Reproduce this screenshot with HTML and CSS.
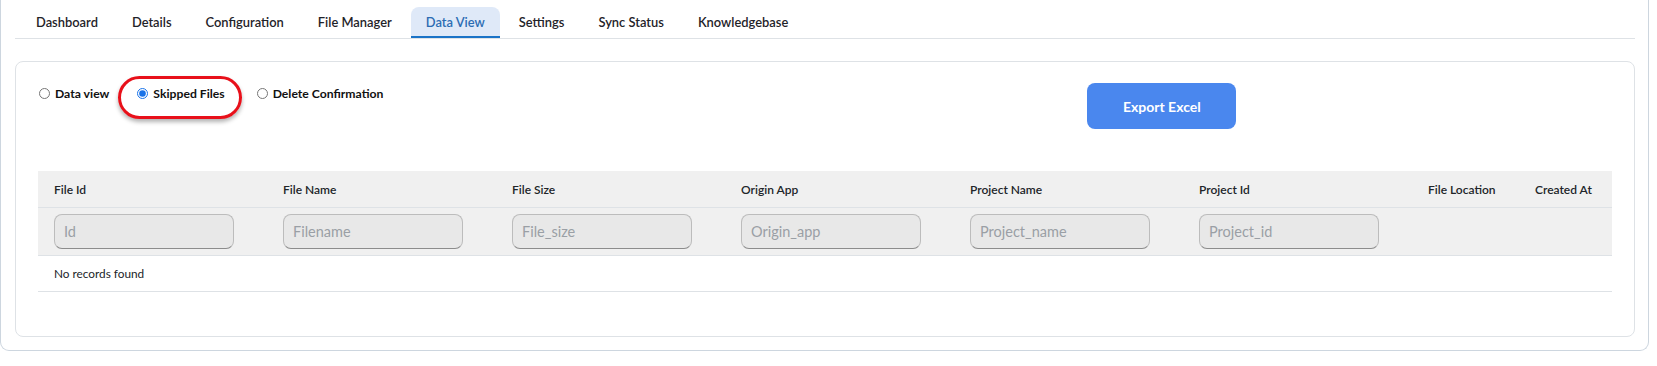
FILE: index.html
```html
<!DOCTYPE html>
<html lang="en">
<head>
    <meta charset="UTF-8">
    <title>Data View</title>
    <link rel="stylesheet" href="styles.css">
</head>
<body>
    <div class="shell">
        <nav class="tabs">
            <a class="tab">Dashboard</a>
            <a class="tab">Details</a>
            <a class="tab">Configuration</a>
            <a class="tab">File Manager</a>
            <a class="tab active">Data View</a>
            <a class="tab">Settings</a>
            <a class="tab">Sync Status</a>
            <a class="tab">Knowledgebase</a>
        </nav>

        <div class="card">
            <div class="toolbar">
                <div class="views">
                    <label class="view"><input type="radio" name="view"> Data view</label>
                    <label class="view marked"><input type="radio" name="view" checked> Skipped Files</label>
                    <label class="view"><input type="radio" name="view"> Delete Confirmation</label>
                </div>
                <div>
                    <button class="export">Export Excel</button>
                </div>
            </div>

            <table class="grid">
                <colgroup>
                    <col class="c-wide"><col class="c-wide"><col class="c-wide">
                    <col class="c-wide"><col class="c-wide"><col class="c-wide">
                    <col class="c-loc"><col>
                </colgroup>
                <thead>
                    <tr class="head">
                        <th>File Id</th>
                        <th>File Name</th>
                        <th>File Size</th>
                        <th>Origin App</th>
                        <th>Project Name</th>
                        <th>Project Id</th>
                        <th>File Location</th>
                        <th>Created At</th>
                    </tr>
                    <tr class="filters">
                        <th><input class="filter" placeholder="Id"></th>
                        <th><input class="filter" placeholder="Filename"></th>
                        <th><input class="filter" placeholder="File_size"></th>
                        <th><input class="filter" placeholder="Origin_app"></th>
                        <th><input class="filter" placeholder="Project_name"></th>
                        <th><input class="filter" placeholder="Project_id"></th>
                        <th></th>
                        <th></th>
                    </tr>
                </thead>
                <tbody>
                    <tr class="empty">
                        <td colspan="8">No records found</td>
                    </tr>
                </tbody>
            </table>
        </div>
    </div>
</body>
</html>
```

FILE: styles.css
```css
body {
    margin: 0;
    font-family: "Lato", "Liberation Sans", sans-serif;
    color: #212529;
    background: #fff;
}
.shell {
    box-sizing: border-box;
    width: 1649px;
    height: 351px;
    padding: 0 13px 0 14px;
    border: 1px solid #cdd6df;
    border-top: none;
    border-radius: 0 0 9px 9px;
}
.tabs {
    display: flex;
    gap: 4px;
    padding: 7px 0 0 6px;
    border-bottom: 1px solid #dee2e6;
}
.tab {
    height: 31px;
    line-height: 31px;
    padding: 0 15px;
    font-size: 12.9px;
    font-weight: 600;
    color: #1f2329;
    border-radius: 8px 8px 0 0;
    box-sizing: border-box;
}
.tab.active {
    background: #dfe9f8;
    color: #2b6cb3;
    border-bottom: 2px solid #1a73c7;
}
.card {
    box-sizing: border-box;
    height: 276px;
    margin-top: 22px;
    padding: 21px 22px 0;
    border: 1px solid #dee2e6;
    border-radius: 8px;
}
.toolbar {
    display: grid;
    grid-template-columns: 2fr 1fr;
    height: 46px;
}
.views {
    display: flex;
    gap: 27px;
    height: 20px;
    align-items: center;
}
.view {
    position: relative;
    display: inline-flex;
    align-items: center;
    gap: 5px;
    font-size: 12.2px;
    font-weight: 700;
    color: #111;
}
.view:last-child {
    margin-left: 4px;
}
.view input {
    width: 11px;
    height: 11px;
    margin: 0 0 0 1px;
    accent-color: #1a73e8;
}
.marked::after {
    content: "";
    position: absolute;
    top: -10px;
    bottom: -18px;
    left: -18px;
    right: -17px;
    border: 3px solid #e8101a;
    border-radius: 22px;
    box-shadow: 0 3px 4px rgba(0, 0, 0, 0.3);
}
.export {
    width: 149px;
    height: 46px;
    border: none;
    border-radius: 8px;
    background: #4a87ee;
    color: #fff;
    font-family: inherit;
    font-size: 14px;
    font-weight: 700;
}
.grid {
    width: 100%;
    margin-top: 42px;
    border-collapse: collapse;
    table-layout: fixed;
}
.c-wide {
    width: 229px;
}
.c-loc {
    width: 107px;
}
.grid th,
.grid td {
    padding: 0 16px;
    text-align: left;
    font-size: 12px;
    white-space: nowrap;
}
.head th {
    height: 36px;
    background: #f0f0f0;
    font-weight: 600;
    border-bottom: 1px solid #dee2e6;
}
.filters th {
    height: 47px;
    background: #f0f0f0;
    border-bottom: 1px solid #dee2e6;
}
.filter {
    box-sizing: border-box;
    display: block;
    width: 180px;
    height: 35px;
    padding: 0 9px;
    border: 1px solid #bcbcbc;
    border-bottom-color: #8c8c8c;
    border-radius: 8px;
    background: #e8e8e8;
    font-family: inherit;
    font-size: 14.5px;
}
.filter::placeholder {
    color: #9a9fa5;
}
.empty td {
    height: 35px;
    font-size: 11.8px;
    border-bottom: 1px solid #dee2e6;
}
```
